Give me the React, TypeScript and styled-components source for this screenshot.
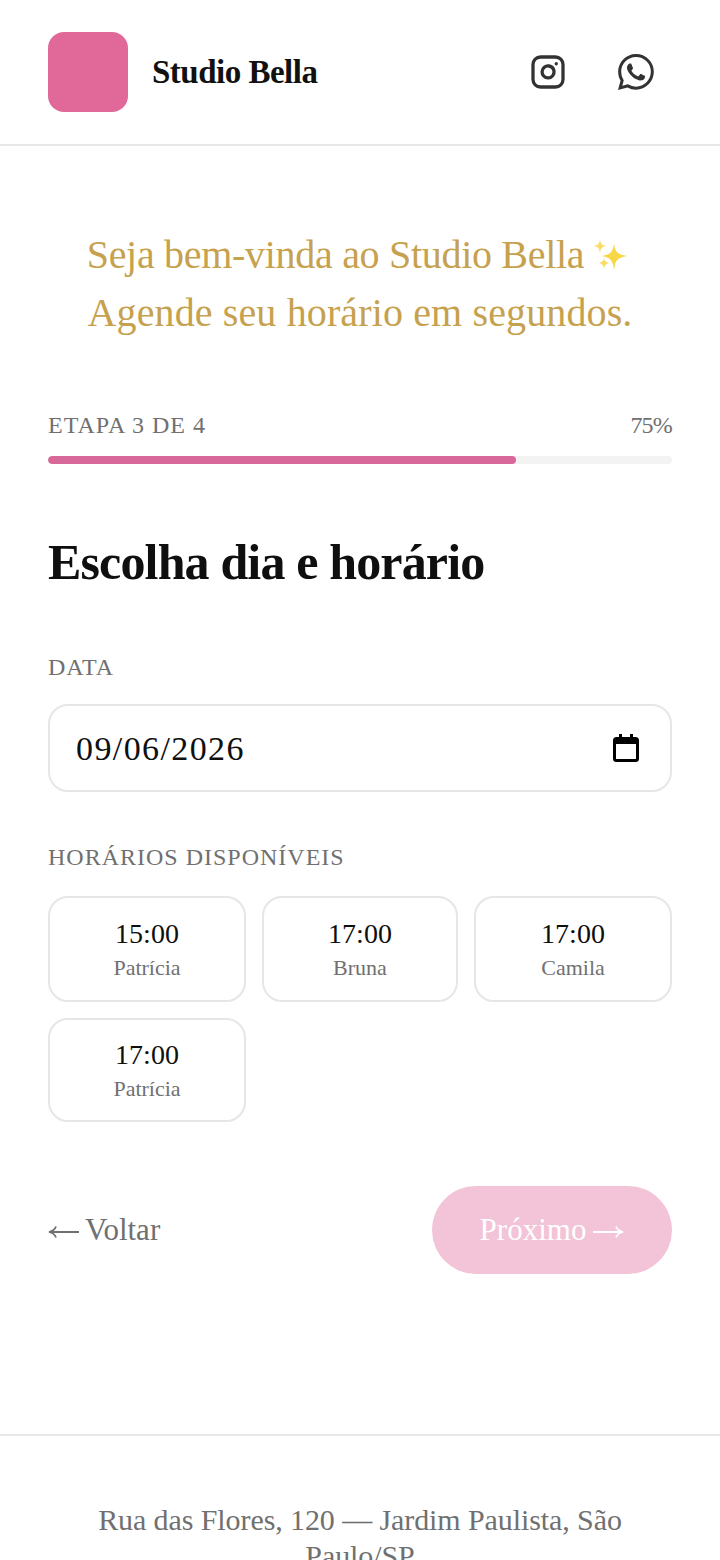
import React from 'react';
import styled, { createGlobalStyle } from 'styled-components';
import { Instagram } from 'lucide-react';
import { BsWhatsapp } from 'react-icons/bs';

const GlobalStyle = createGlobalStyle`
  html, body {
    margin: 0;
    padding: 0;
    background: #fff;
  }
  body {
    font-family: "Liberation Serif", "DejaVu Serif", serif;
    color: #0f0f0f;
  }
  * {
    box-sizing: border-box;
  }
`;

const Header = styled.header`
  display: flex;
  align-items: center;
  justify-content: space-between;
  height: 146px;
  padding: 0 48px;
  border-bottom: 2px solid #e8e8e8;
`;

const Brand = styled.div`
  display: flex;
  align-items: center;
  gap: 24px;
`;

const Logo = styled.div`
  width: 80px;
  height: 80px;
  border-radius: 16px;
  background: #e0699a;
`;

const BrandName = styled.div`
  font-size: 33px;
  font-weight: 700;
  letter-spacing: -0.5px;
  color: #111;
`;

const Socials = styled.nav`
  display: flex;
  align-items: center;
  gap: 52px;
  padding-right: 18px;
  color: #333;
`;

const SocialLink = styled.a`
  display: flex;
  color: inherit;
`;

const Main = styled.main`
  padding: 80px 48px 160px;
`;

const Greeting = styled.p`
  margin: 0;
  font-size: 40px;
  line-height: 58px;
  text-align: center;
  color: #c6a14e;
`;

const GreetingLine = styled.span<{ $spacing: number }>`
  display: block;
  letter-spacing: ${({ $spacing }) => $spacing}px;
`;

const Sparkles = styled.svg`
  display: inline-block;
  width: 36px;
  height: 36px;
  margin: 0 5px 0 8px;
  vertical-align: -5px;
`;

const ProgressHead = styled.div`
  display: flex;
  align-items: center;
  justify-content: space-between;
  margin-top: 67px;
  height: 32px;
  font-size: 24px;
  color: #707070;
`;

const StepLabel = styled.span`
  letter-spacing: 1px;
`;

const Percent = styled.span`
  letter-spacing: -0.8px;
`;

const ProgressTrack = styled.div`
  height: 8px;
  margin-top: 15px;
  border-radius: 4px;
  background: #f3f3f3;
  overflow: hidden;
`;

const ProgressFill = styled.div`
  height: 100%;
  border-radius: 4px;
  background: #d9689a;
`;

const Heading = styled.h1`
  margin: 66px 0 0;
  font-size: 50px;
  line-height: 64px;
  font-weight: 700;
  letter-spacing: -0.85px;
  color: #0f0f0f;
`;

const FieldLabel = styled.div<{ $top: number }>`
  height: 32px;
  margin-top: ${({ $top }) => $top}px;
  font-size: 24px;
  line-height: 32px;
  letter-spacing: 1px;
  color: #707070;
`;

const DateField = styled.div`
  display: flex;
  align-items: center;
  justify-content: space-between;
  height: 88px;
  margin-top: 21px;
  padding: 0 30px 0 26px;
  border: 2px solid #e6e6e6;
  border-radius: 20px;
  color: #0f0f0f;
`;

const DateText = styled.span`
  padding-top: 2px;
  font-size: 34px;
  line-height: 38px;
  letter-spacing: 1.4px;
`;

const SlotGrid = styled.div`
  display: grid;
  grid-template-columns: 198px 196px 198px;
  gap: 16px;
  margin-top: 23px;
`;

const Slot = styled.button<{ $height: number }>`
  display: flex;
  flex-direction: column;
  align-items: center;
  justify-content: center;
  height: ${({ $height }) => $height}px;
  padding: 2px 0 0;
  background: #fff;
  border: 2px solid #e6e6e6;
  border-radius: 20px;
  font-family: inherit;
`;

const SlotTime = styled.span`
  font-size: 28px;
  line-height: 36px;
  color: #0f0f0f;
`;

const SlotName = styled.span`
  font-size: 22px;
  line-height: 32px;
  color: #707070;
`;

const Actions = styled.div`
  display: flex;
  align-items: center;
  justify-content: space-between;
  margin-top: 64px;
`;

const BackButton = styled.button`
  display: flex;
  align-items: center;
  gap: 6px;
  padding: 0;
  border: 0;
  background: none;
  font-family: inherit;
  font-size: 31px;
  color: #707070;
`;

const NextButton = styled.button`
  display: flex;
  align-items: center;
  justify-content: center;
  gap: 7px;
  width: 240px;
  height: 88px;
  padding: 0;
  border: 0;
  border-radius: 44px;
  background: #f3c3d7;
  font-family: inherit;
  font-size: 31px;
  color: #fff;
`;

const ArrowIcon = styled.svg<{ $flip?: boolean }>`
  width: 31px;
  height: 16px;
  margin-top: 3px;
  transform: ${({ $flip }) => ($flip ? 'scaleX(-1)' : 'none')};
`;

const Footer = styled.footer`
  padding: 66px 48px 48px;
  border-top: 2px solid #e8e8e8;
  font-size: 30px;
  line-height: 36px;
  letter-spacing: -0.09px;
  text-align: center;
  color: #707070;
`;

const slots = [
  { time: '15:00', name: 'Patrícia', height: 106 },
  { time: '17:00', name: 'Bruna', height: 106 },
  { time: '17:00', name: 'Camila', height: 106 },
  { time: '17:00', name: 'Patrícia', height: 104 }
];

const SparkleIcon = () => (
  <Sparkles viewBox="0 0 36 36" aria-hidden="true">
    <path d="M22 6 C23 15 25 17 35 19 C25 21 23 23 22 34 C21 23 19 21 10 19 C19 17 21 15 22 6Z" fill="#f7d748" />
    <path d="M8 2 C8.500 7 10 8 14 9 C10 10 8.500 11 8 17 C7.500 11 6 10 2 9 C6 8 7.500 7 8 2Z" fill="#f9dc6a" />
    <path d="M12 21 C12.500 24 14 25 17 26 C14 27 12.500 28 12 32 C11.500 28 10 27 7 26 C10 25 11.500 24 12 21Z" fill="#f9dc6a" />
  </Sparkles>
);

const CalendarIcon = () => (
  <svg width="28" height="30" viewBox="0 0 28 30" aria-hidden="true">
    <path
      d="M7 1h3v3h8V1h3v3h2.500A3.500 3.500 0 0 1 27 7.500v18a3.500 3.500 0 0 1-3.500 3.500h-19A3.500 3.500 0 0 1 1 25.500v-18A3.500 3.500 0 0 1 4.500 4H7zM4 11v14.500a.5.500 0 0 0 .5.500h19a.5.500 0 0 0 .5-.5V11z"
      fill="#000"
      fillRule="evenodd"
    />
  </svg>
);

const Arrow = ({ flip }: { flip?: boolean }) => (
  <ArrowIcon $flip={flip} viewBox="0 0 31 16" aria-hidden="true">
    <path d="M0 8h29M23 2.500c1 3 3 4.500 7 5.500c-4 1-6 2.500-7 5.500" fill="none" stroke="currentColor" strokeWidth="1.800" />
  </ArrowIcon>
);

export default function App() {
  return (
    <>
      <GlobalStyle />
      <Header>
        <Brand>
          <Logo />
          <BrandName>Studio Bella</BrandName>
        </Brand>
        <Socials>
          <SocialLink href="#">
            <Instagram size={36} strokeWidth={2.2} />
          </SocialLink>
          <SocialLink href="#">
            <BsWhatsapp size={36} />
          </SocialLink>
        </Socials>
      </Header>
      <Main>
        <Greeting>
          <GreetingLine $spacing={-0.3}>
            Seja bem-vinda ao Studio Bella
            <SparkleIcon />
          </GreetingLine>
          <GreetingLine $spacing={0.13}>Agende seu horário em segundos.</GreetingLine>
        </Greeting>
        <ProgressHead>
          <StepLabel>ETAPA 3 DE 4</StepLabel>
          <Percent>75%</Percent>
        </ProgressHead>
        <ProgressTrack>
          <ProgressFill style={{ width: '75%' }} />
        </ProgressTrack>
        <Heading>Escolha dia e horário</Heading>
        <FieldLabel $top={57}>DATA</FieldLabel>
        <DateField>
          <DateText>09/06/2026</DateText>
          <CalendarIcon />
        </DateField>
        <FieldLabel $top={49}>HORÁRIOS DISPONÍVEIS</FieldLabel>
        <SlotGrid>
          {slots.map((slot, index) => (
            <Slot key={`slot-${index}`} $height={slot.height}>
              <SlotTime>{slot.time}</SlotTime>
              <SlotName>{slot.name}</SlotName>
            </Slot>
          ))}
        </SlotGrid>
        <Actions>
          <BackButton>
            <Arrow flip />
            Voltar
          </BackButton>
          <NextButton>
            Próximo
            <Arrow />
          </NextButton>
        </Actions>
      </Main>
      <Footer>Rua das Flores, 120 — Jardim Paulista, São Paulo/SP</Footer>
    </>
  );
}
